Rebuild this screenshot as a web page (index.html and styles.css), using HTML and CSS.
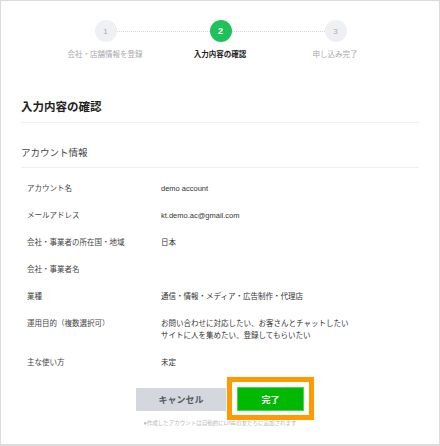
FILE: index.html
```html
<!DOCTYPE html>
<html lang="ja">
<head>
<meta charset="utf-8">
<link rel="stylesheet" href="styles.css">
</head>
<body>
<div class="page">
  <div class="steps">
    <div class="track">
      <span class="dot">1</span>
      <span class="line"></span>
      <span class="dot active">2</span>
      <span class="line"></span>
      <span class="dot">3</span>
    </div>
    <div class="labels">
      <span class="label">会社・店舗情報を登録</span>
      <span class="label active">入力内容の確認</span>
      <span class="label">申し込み完了</span>
    </div>
  </div>

  <div class="content">
    <h1 class="title">入力内容の確認</h1>
    <h2 class="section">アカウント情報</h2>
    <dl class="rows">
      <div class="row"><dt>アカウント名</dt><dd>demo account</dd></div>
      <div class="row"><dt>メールアドレス</dt><dd>kt.demo.ac@gmail.com</dd></div>
      <div class="row"><dt>会社・事業者の所在国・地域</dt><dd>日本</dd></div>
      <div class="row"><dt>会社・事業者名</dt><dd></dd></div>
      <div class="row"><dt>業種</dt><dd>通信・情報・メディア・広告制作・代理店</dd></div>
      <div class="row"><dt>運用目的（複数選択可）</dt><dd>お問い合わせに対応したい、お客さんとチャットしたい<br>サイトに人を集めたい、登録してもらいたい</dd></div>
      <div class="row"><dt>主な使い方</dt><dd>未定</dd></div>
    </dl>
    <div class="actions">
      <button class="btn cancel">キャンセル</button>
      <div class="done-wrap">
        <button class="btn done">完了</button>
        <span class="highlight"></span>
      </div>
    </div>
    <p class="note">●作成したアカウントは自動的にLINEの友だちに追加されます</p>
  </div>
</div>
</body>
</html>
```

FILE: styles.css
```css
* { box-sizing: border-box; }
html, body { margin: 0; padding: 0; background: #fff; }
body {
  font-family: "Liberation Sans", "Noto Sans CJK JP", sans-serif;
  color: #333;
}
.page {
  width: 440px;
  height: 446px;
  border: 1px solid #dcdcdc;
  border-bottom-width: 2px;
  overflow: hidden;
}
.steps { padding-top: 19px; }
.track {
  display: flex;
  align-items: center;
  width: 252px;
  margin-left: 93.5px;
}
.dot {
  width: 22px;
  height: 22px;
  border-radius: 50%;
  background: #eff0f4;
  color: #a9acb2;
  font-size: 8px;
  display: flex;
  align-items: center;
  justify-content: center;
  flex: none;
}
.dot.active {
  background: #1fc15b;
  color: #fff;
  font-weight: bold;
  font-size: 9px;
}
.line {
  flex: 1;
  height: 0;
  border-top: 1px dotted #d2d4d8;
}
.labels {
  display: flex;
  margin-left: 46.5px;
  margin-top: 8px;
}
.label {
  width: 115px;
  text-align: center;
  font-size: 7.5px;
  line-height: 10px;
  color: #a6a8ad;
  white-space: nowrap;
}
.label.active { color: #222; font-weight: bold; }

.content { padding: 0 20px; }
.title {
  margin: 40px 0 0;
  font-size: 11.5px;
  line-height: 14px;
  font-weight: bold;
  color: #222;
  padding-bottom: 8px;
  border-bottom: 1px solid #eeeeee;
}
.section {
  margin: 24px 0 0;
  font-size: 9.5px;
  line-height: 12px;
  font-weight: normal;
  color: #444;
  padding-bottom: 8px;
  border-bottom: 1px solid #f0f0f0;
}
.rows {
  margin: 15px 0 0;
  padding: 0 0 0 6px;
  display: flex;
  flex-direction: column;
  gap: 15px;
}
.row { display: flex; }
.row dt {
  width: 134px;
  flex: none;
  font-size: 7.5px;
  line-height: 12px;
  color: #444;
  white-space: nowrap;
}
.row dd {
  margin: 0;
  font-size: 7.5px;
  line-height: 12px;
  color: #333;
  min-height: 12px;
  white-space: nowrap;
}
.actions {
  display: flex;
  justify-content: center;
  align-items: center;
  gap: 11px;
  margin-top: 18px;
}
.btn {
  border: none;
  font-family: inherit;
  font-weight: bold;
  font-size: 9px;
  padding: 0;
}
.cancel {
  width: 90px;
  height: 23px;
  background: #d4d7de;
  color: #555a62;
}
.done-wrap { position: relative; }
.done {
  display: block;
  width: 67px;
  height: 24px;
  background: #00b900;
  border: 1px solid #55d055;
  color: #fff;
}
.highlight {
  position: absolute;
  left: -10px;
  top: -10px;
  right: -10px;
  bottom: -9px;
  border: 5px solid #ff9a00;
  pointer-events: none;
}
.note {
  margin: 8px 0 0;
  text-align: center;
  font-size: 5.5px;
  line-height: 8px;
  color: #b8b8b8;
  white-space: nowrap;
}
```
